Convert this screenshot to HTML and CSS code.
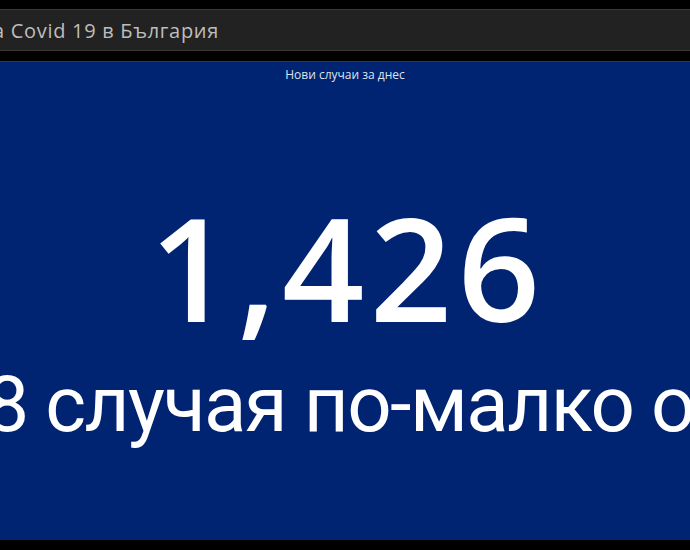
FILE: index.html
```html
<!DOCTYPE html>
<html lang="bg">
<head>
<meta charset="utf-8">
<title>Covid 19 в България</title>
<link rel="stylesheet" href="styles.css">
</head>
<body>
<div class="page">
  <header class="header">
    <h1 class="title">а Covid 19 в България</h1>
  </header>
  <main class="panel">
    <div class="subtitle">Нови случаи за днес</div>
    <div class="value">1,426</div>
    <div class="compare"><span>-18 случая по-малко от вчера</span></div>
  </main>
</div>
</body>
</html>
```

FILE: styles.css
```css
html, body {
  margin: 0;
  padding: 0;
  background: #000;
  overflow: hidden;
}
.page {
  width: 690px;
  height: 550px;
  display: flex;
  flex-direction: column;
  font-family: "Open Sans", "Lato", sans-serif;
}
.header {
  margin-top: 9px;
  height: 40px;
  background: #222;
  border-top: 1px solid #383838;
  border-bottom: 1px solid #383838;
  display: flex;
  align-items: center;
  overflow: hidden;
}
.title {
  margin: 0 0 0 -7px;
  font-size: 20px;
  font-weight: 400;
  letter-spacing: 0.7px;
  color: #bdbdbd;
  white-space: nowrap;
}
.panel {
  margin-top: 10px;
  height: 478px;
  background: #002471;
  border-top: 1px solid #1c3a80;
  overflow: hidden;
  display: flex;
  flex-direction: column;
  align-items: center;
  color: #fff;
}
.subtitle {
  margin-top: 7px;
  font-size: 12px;
  line-height: 1;
  color: #dfe3ee;
}
.value {
  margin-top: 113px;
  margin-right: -5px;
  font-size: 144px;
  letter-spacing: 5.5px;
  line-height: 1;
  font-weight: 600;
}
.compare {
  margin-top: 28px;
  width: 100%;
  display: flex;
  justify-content: flex-start;
  font-family: "Roboto", "Open Sans", sans-serif;
  font-size: 78px;
  letter-spacing: -1.6px;
  line-height: 1;
  white-space: nowrap;
}
.compare span {
  flex: none;
  margin-left: -77px;
}
```
